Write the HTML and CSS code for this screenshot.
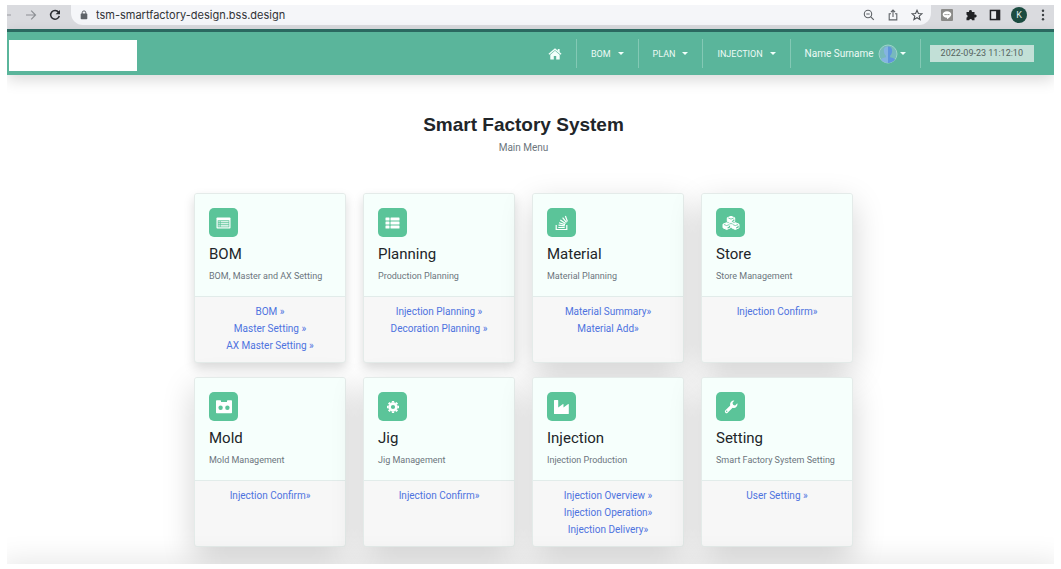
FILE: index.html
```html
<!DOCTYPE html>
<html lang="en">
<head>
<meta charset="utf-8">
<title>Smart Factory System</title>
<link rel="stylesheet" href="styles.css">
</head>
<body>
<div class="window">
  <div class="toolbar">
    <button class="tool back" aria-label="Back"><svg width="12" height="12" viewBox="0 0 12 12"><path d="M11 6H1M6 1 1 6l5 5" fill="none" stroke="#999ca1" stroke-width="1.2"/></svg></button>
    <button class="tool forward" aria-label="Forward"><svg width="12" height="12" viewBox="0 0 12 12"><path d="M1 6h9.5M6.2 1.7 10.5 6l-4.3 4.3" fill="none" stroke="#8d9095" stroke-width="1.2"/></svg></button>
    <button class="tool reload" aria-label="Reload"><svg width="12" height="12" viewBox="0 0 12 12"><path d="M9.6 3.2A4.4 4.4 0 1 0 10.3 7" fill="none" stroke="#2b2d31" stroke-width="1.5"/><path d="M11 .9v4.4H6.6z" fill="#2b2d31"/></svg></button>
    <div class="address">
      <svg width="8" height="10" viewBox="0 0 8 10"><rect x=".7" y="3.6" width="6.6" height="5.6" rx=".8" fill="#5f6368"/><path d="M2.2 4V2.7a1.8 1.8 0 0 1 3.6 0V4" fill="none" stroke="#5f6368"/></svg>
      <input class="url" type="text" aria-label="Address" value="tsm-smartfactory-design.bss.design">
      <button class="tool" aria-label="Zoom"><svg width="12" height="12" viewBox="0 0 12 12"><circle cx="5" cy="5" r="3.7" fill="none" stroke="#5f6368" stroke-width="1.1"/><path d="m7.8 7.8 3 3M3.3 5h3.4" stroke="#5f6368" stroke-width="1.2"/></svg></button>
      <button class="tool" aria-label="Share"><svg width="12" height="12" viewBox="0 0 12 12"><path d="M4 4.7H2.2v6.2h7.6V4.7H8M6 8V1.2M3.9 3.2 6 1.1l2.1 2.1" fill="none" stroke="#5f6368" stroke-width="1.1"/></svg></button>
      <button class="tool" aria-label="Bookmark"><svg width="12" height="12" viewBox="0 0 12 12"><path d="m6 1.3 1.4 3.2 3.5.3-2.7 2.3.9 3.4L6 8.700l-3.100 1.800.9-3.400L1.100 4.800l3.500-.3z" fill="none" stroke="#4d5156" stroke-width="1.100"/></svg></button>
    </div>
    <div class="extensions">
      <button class="tool" aria-label="Messages"><svg width="12" height="12" viewBox="0 0 12 12"><rect width="12" height="12" rx="1" fill="#8b8b89"/><path d="M6 2.300c2.500 0 4.300 1.500 4.300 3.300S8 9 6 10.200V8.800C3.500 8.800 1.700 7.400 1.700 5.600S3.500 2.300 6 2.300z" fill="#fff"/><path d="M3.500 5.600h5" stroke="#8b8b89" stroke-dasharray="1.300 .500"/></svg></button>
      <button class="tool" aria-label="Extensions"><svg width="12" height="12" viewBox="0 0 12 12"><path d="M1.500 3h2.500a1.500 1.500 0 1 1 2.900 0h2.600v2.700a1.500 1.500 0 1 1 0 2.700v2.800H7.100a1.500 1.500 0 0 0-2.900 0H1.500V8.600a1.500 1.500 0 0 0 0-2.900z" fill="#202124"/></svg></button>
      <button class="tool" aria-label="Side panel"><svg width="12" height="12" viewBox="0 0 12 12"><path d="M.7.700h10.600v10.600H.7z" fill="#202124"/><path d="M2.200 2.200h4.900v7.600H2.200z" fill="#e6e7ea"/></svg></button>
      <button class="profile">K</button>
      <button class="tool" aria-label="More"><svg width="12" height="12" viewBox="0 0 12 12"><g fill="#3c4043"><circle cx="6" cy="1.700" r="1.200"/><circle cx="6" cy="6" r="1.200"/><circle cx="6" cy="10.300" r="1.200"/></g></svg></button>
    </div>
  </div>

  <header class="navbar">
    <a class="brand" href="#" aria-label="Company home"></a>
    <nav class="menu">
      <a class="item home" href="#" aria-label="Home"><svg width="14" height="12" viewBox="0 0 14 12"><path d="M7 2.700 2.300 6.700V11q0 .5.500.5h3V8h2.400v3.500h3q.5 0 .5-.5V6.700z" fill="#f2fffb"/><path d="M.9 6.300 7 1.200l6.100 5.100" fill="none" stroke="#f2fffb" stroke-width="1.300"/><path d="M9.800 1h1.800v3.400L9.800 2.900z" fill="#f2fffb"/></svg></a>
      <button class="item">BOM<span class="caret"></span></button>
      <button class="item">PLAN<span class="caret"></span></button>
      <button class="item">INJECTION<span class="caret"></span></button>
      <button class="item user">Name Surname
        <svg class="avatar" width="20" height="20" viewBox="0 0 20 20"><circle cx="10" cy="10" r="9" fill="#77b9bd" stroke="#9dd4c8"/><path d="M10 2.500c-3 0-4.400 2-4.100 4.700.2 2.100 1 3.600 2 4.500v1.500C5 14 3.400 14.600 2.900 15.500A9 9 0 0 0 10 19z" fill="#85b4e2"/><path d="M10 2.500c3 0 4.400 2 4.100 4.700-.2 2.100-1 3.600-2 4.500v1.500c2.900.8 4.500 1.400 5 2.300A9 9 0 0 1 10 19z" fill="#5f96dc"/></svg>
        <span class="caret"></span></button>
      <div class="item clock"><time class="time">2022-09-23 11:12:10</time></div>
    </nav>
  </header>

  <main class="content">
    <h1 class="title">Smart Factory System</h1>
    <p class="subtitle">Main Menu</p>
    <div class="cards">
      <section class="card light">
        <div class="card-body">
          <span class="icon"><svg width="15" height="12" viewBox="0 0 15 12"><rect x=".5" y=".5" width="14" height="11" rx=".8" fill="#fff"/><path d="M1.700 3.300h11.600v7H1.700z" fill="#5bc499"/><path d="M2.500 4.700h1.200M4.600 4.700h8M2.500 6.800h1.200M4.600 6.800h8M2.500 8.900h1.200M4.600 8.900h8" stroke="#fff" stroke-width="1.100"/></svg></span>
          <h2 class="name">BOM</h2>
          <p class="about">BOM, Master and AX Setting</p>
        </div>
        <div class="links"><a href="#">BOM »</a><a href="#">Master Setting »</a><a href="#">AX Master Setting »</a></div>
      </section>
      <section class="card light">
        <div class="card-body">
          <span class="icon"><svg width="15" height="12" viewBox="0 0 15 12"><g fill="#fff"><rect x=".5" y=".5" width="4" height="3" rx=".5"/><rect x=".5" y="4.500" width="4" height="3" rx=".5"/><rect x=".5" y="8.500" width="4" height="3" rx=".5"/><rect x="5.500" y=".5" width="9" height="3" rx=".5"/><rect x="5.500" y="4.500" width="9" height="3" rx=".5"/><rect x="5.500" y="8.500" width="9" height="3" rx=".5"/></g></svg></span>
          <h2 class="name">Planning</h2>
          <p class="about">Production Planning</p>
        </div>
        <div class="links"><a href="#">Injection Planning »</a><a href="#">Decoration Planning »</a></div>
      </section>
      <section class="card">
        <div class="card-body">
          <span class="icon"><svg width="14" height="16" viewBox="0 0 14 16"><path d="M1.200 10v4.500h10.600V10M3.300 12.500h6.400M3.500 10.200l6.300.7M4 7.700l6 1.900M5.300 5l5.300 3.400M7.600 2.700l3.900 4.700M10.400 1l2 5.500" fill="none" stroke="#fff" stroke-width="1.200"/></svg></span>
          <h2 class="name">Material</h2>
          <p class="about">Material Planning</p>
        </div>
        <div class="links"><a href="#">Material Summary»</a><a href="#">Material Add»</a></div>
      </section>
      <section class="card">
        <div class="card-body">
          <span class="icon"><svg width="18" height="16" viewBox="0 0 18 16"><g fill="#fff" stroke="#fff" stroke-width="1" stroke-linejoin="round"><path d="m9 1.300 3.700 1.500v3.600L9 8 5.300 6.400V2.800zM4.700 7.700l3.700 1.500v3.600l-3.700 1.700L1 12.800V9.200zM13.300 7.700 17 9.200v3.600l-3.700 1.700-3.700-1.700V9.200z"/></g><g fill="none" stroke="#5bc499" stroke-width=".8"><path d="M6.300 3 9 4.100 11.700 3M2 9.500l2.700 1.100 2.700-1.100M10.600 9.500l2.700 1.100L16 9.500"/><path d="M9.900 6.600 11.800 5.700V4.500M5.600 13l1.900-.9v-1.300M14.200 13l1.900-.9v-1.300" stroke-width="1.100"/></g></svg></span>
          <h2 class="name">Store</h2>
          <p class="about">Store Management</p>
        </div>
        <div class="links"><a href="#">Injection Confirm»</a></div>
      </section>
      <section class="card">
        <div class="card-body">
          <span class="icon"><svg width="18" height="14" viewBox="0 0 18 14"><path d="M1 1q0-.7.700-.7h3.600Q6 .3 6 1v1h6V1q0-.7.700-.7h3.600q.7 0 .7.700v11.500q0 .7-.7.700H1.700q-.7 0-.7-.7z" fill="#fff"/><circle cx="5.600" cy="7.700" r="2.200" fill="#5bc499"/><circle cx="12.400" cy="7.700" r="2.200" fill="#5bc499"/></svg></span>
          <h2 class="name">Mold</h2>
          <p class="about">Mold Management</p>
        </div>
        <div class="links"><a href="#">Injection Confirm»</a></div>
      </section>
      <section class="card">
        <div class="card-body">
          <span class="icon"><svg width="14" height="14" viewBox="0 0 14 14"><circle cx="7" cy="7" r="3.400" fill="none" stroke="#fff" stroke-width="2.600"/><path d="M7 1v1.600M7 11.400V13M1 7h1.600M11.400 7H13M2.800 2.800l1.100 1.100M10.100 10.100l1.100 1.100M11.200 2.800l-1.100 1.100M3.900 10.100l-1.100 1.100" stroke="#fff" stroke-width="2.300"/></svg></span>
          <h2 class="name">Jig</h2>
          <p class="about">Jig Management</p>
        </div>
        <div class="links"><a href="#">Injection Confirm»</a></div>
      </section>
      <section class="card">
        <div class="card-body">
          <span class="icon"><svg width="15" height="14" viewBox="0 0 15 14"><path d="M0 .6Q0 0 .6 0h3q.6 0 .6.600v6.900L9 4.100q.5-.3.500.3v3.100L14.200 4.100q.6-.3.600.3v9q0 .6-.6.600H.6q-.6 0-.6-.6z" fill="#fff"/></svg></span>
          <h2 class="name">Injection</h2>
          <p class="about">Injection Production</p>
        </div>
        <div class="links"><a href="#">Injection Overview »</a><a href="#">Injection Operation»</a><a href="#">Injection Delivery»</a></div>
      </section>
      <section class="card">
        <div class="card-body">
          <span class="icon"><svg width="14" height="14" viewBox="0 0 14 14"><path d="m2.500 11.500 5.700-5.700" stroke="#fff" stroke-width="3.200" stroke-linecap="round"/><path d="M13.300 3.200a3.700 3.700 0 1 1-2.900-2.600L8.500 2.700l.5 2.200 2.200.5z" fill="#fff"/><circle cx="2.700" cy="11.300" r=".7" fill="#5bc499"/></svg></span>
          <h2 class="name">Setting</h2>
          <p class="about">Smart Factory System Setting</p>
        </div>
        <div class="links"><a href="#">User Setting »</a></div>
      </section>
    </div>
  </main>
  <footer class="footer"></footer>
</div>
</body>
</html>
```
FILE: styles.css
```css
* { box-sizing: border-box; }
body {
  margin: 0;
  padding: 5px 7px;
  height: 100vh;
  background: #fff;
  font-family: Roboto, "Noto Sans", sans-serif;
  color: #212529;
}
button, input { font: inherit; color: inherit; border: 0; padding: 0; background: none; }
a { text-decoration: none; }
h1, h2, p { margin: 0; }
svg { display: block; flex: none; }

.window { height: 100%; overflow: hidden; display: flex; flex-direction: column; }

/* Browser toolbar */
.toolbar {
  flex: none;
  display: flex;
  height: 24px;
  padding-bottom: 4px;
  align-items: stretch;
  background: #dadbdf;
}
.tool { display: flex; align-items: center; justify-content: center; width: 12px; }
.back { margin-left: -7px; }
.forward { margin-left: 13px; }
.reload { margin: 0 10px 0 12px; }
.address {
  flex: 1;
  display: flex;
  align-items: center;
  gap: 12px;
  padding: 0 8px 0 9px;
  background: #f5f6f9;
  border-radius: 0 0 12px 12px;
}
.address .url {
  flex: 1;
  margin-left: -4px;
  height: 20px;
  font-family: Inter, sans-serif;
  font-size: 11px;
  color: #303236;
  outline: 0;
}
.extensions { display: flex; gap: 12px; padding: 0 5px 0 10px; align-items: center; }
.profile {
  width: 16px;
  height: 16px;
  margin: 0 -2px;
  border-radius: 50%;
  background: #1c4c41;
  color: #e3eeea;
  font-size: 9px;
  line-height: 16px;
  text-align: center;
}

/* Site navigation */
.navbar {
  flex: none;
  display: flex;
  justify-content: space-between;
  align-items: center;
  height: 46px;
  padding: 0 20px 0 2px;
  border-top: 3px solid #2b6860;
  background: #5ab59b;
  box-shadow: 0 5px 14px rgba(0, 0, 0, .15);
}
.brand { width: 128px; height: 31px; margin-top: 3px; background: #fff; }
.menu { display: flex; align-items: center; }
.item {
  display: flex;
  align-items: center;
  height: 29px;
  padding: 0 14px;
  border-left: 1px solid #83c9b5;
  color: #edfaf6;
  font-size: 9px;
}
.item.home { border-left: 0; }
.caret {
  margin-left: 7px;
  border: 3px solid transparent;
  border-top-color: #f2fffb;
  border-bottom: 0;
}
.item.user { font-size: 10px; }
.user .avatar { margin-left: 4px; }
.user .caret { margin-left: 2px; }
.item.clock { padding: 0 0 0 9px; }
.time {
  padding: 0 11px;
  line-height: 17px;
  background: #c2e0d7;
  color: #55635f;
}

/* Menu page */
.content { flex: 1; padding: 38px 14px 0 0; text-align: center; }
.title { font: bold 19px/24px "Liberation Sans", Arial, sans-serif; }
.subtitle { margin-top: 4px; font-size: 10px; line-height: 14px; color: #6c757d; }
.cards {
  display: grid;
  grid-template-columns: repeat(4, 1fr);
  gap: 14px 17px;
  max-width: 659px;
  margin: 38px auto 0;
}
.card {
  display: flex;
  flex-direction: column;
  min-height: 170px;
  border: 1px solid #e4ebe9;
  border-radius: 3px;
  background: #f7f7f7;
  box-shadow: 0 11px 32px rgba(0, 0, 0, .175);
}
.card.light { box-shadow: 0 5px 11px rgba(0, 0, 0, .15); }
.card-body {
  padding: 14px 14px 13px;
  border-bottom: 1px solid #e2ecea;
  border-radius: 2px 2px 0 0;
  background: #f6fffc;
  text-align: left;
}
.icon {
  display: flex;
  align-items: center;
  justify-content: center;
  width: 29px;
  height: 29px;
  border-radius: 5px;
  background: #5bc499;
}
.name { margin-top: 7px; font-size: 15px; line-height: 20px; font-weight: 400; }
.about { margin-top: 5px; font-size: 9px; line-height: 14px; color: #6c757d; white-space: nowrap; }
.links { display: flex; flex-direction: column; align-items: center; padding-top: 6px; }
.links a { font-size: 10px; line-height: 17px; color: #4e73df; }
.footer { flex: none; height: 1px; margin-bottom: -1px; box-shadow: 0 11px 32px 8px rgba(0, 0, 0, .175); }
```
